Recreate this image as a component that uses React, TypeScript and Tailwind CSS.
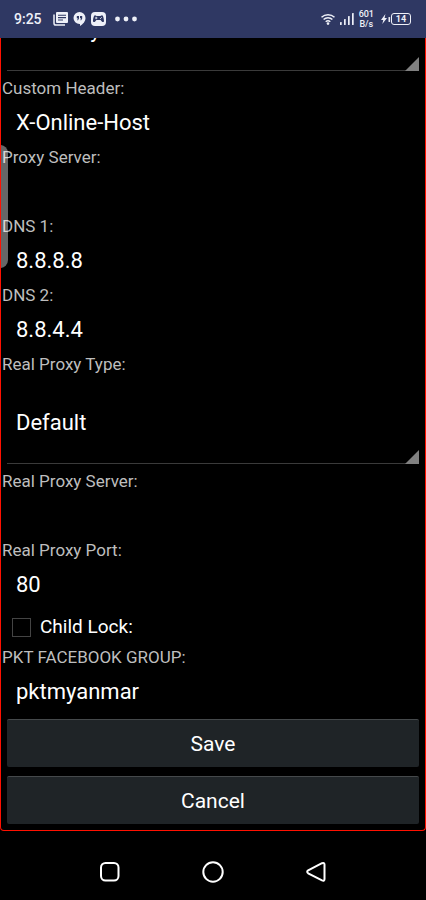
import { useState } from 'react';

interface TextFieldProps {
  id: string;
  label: string;
  initial?: string;
}

interface SelectBoxProps {
  id: string;
  options: string[];
  title?: string;
}

function FieldLabel({ id, label }: { id: string; label: string }) {
  return (
    <label htmlFor={id} className="block h-[21px] pl-px text-[17px] leading-[21px] text-[#bebebe]">
      {label}
    </label>
  );
}

function TextField({ id, label, initial = '' }: TextFieldProps) {
  const [value, setValue] = useState(initial);

  return (
    <div>
      <FieldLabel id={id} label={label} />
      <input
        id={id}
        type="text"
        value={value}
        onChange={(e) => setValue(e.target.value)}
        className="block h-12 w-full bg-transparent px-[15px] pb-0.5 text-[22px] text-white outline-none"
      />
    </div>
  );
}

function SelectBox({ id, options, title }: SelectBoxProps) {
  return (
    <div className="relative px-1.5 pb-[7px]">
      <select
        id={id}
        aria-label={title}
        className="block h-[89px] w-full appearance-none border-b border-[#3a3a3a] bg-black px-[9px] pt-1.5 text-[22px] text-white outline-none"
      >
        {options.map((option) => (
          <option key={option}>{option}</option>
        ))}
      </select>
      <svg
        className="pointer-events-none absolute right-1.5 bottom-[7px]"
        width="14"
        height="14"
        viewBox="0 0 14 14"
        fill="#808080"
      >
        <path d="M14 0v14H0z" />
      </svg>
    </div>
  );
}

function StatusBar() {
  return (
    <header className="relative z-10 flex h-[38px] items-center justify-between bg-[#2f3863] pr-[15px] pl-3.5 text-[#eef0f8]">
      <div className="flex items-center">
        <span className="text-sm font-medium">9:25</span>
        <svg className="ml-[11px]" width="15" height="14" viewBox="0 0 15 14" fill="none">
          <path d="M1 2.5v8.7c0 1 .8 1.8 1.8 1.8H12" stroke="currentColor" strokeWidth="1.5" />
          <rect x="3" width="12" height="11" rx="1" fill="currentColor" />
          <path d="M5 3.2h8M5 5.6h8M5 8h5" stroke="#2f3863" strokeWidth="1.1" />
        </svg>
        <svg className="ml-[5px]" width="13" height="14" viewBox="0 0 13 14">
          <path d="M6.5 0a6 6 0 0 1 6 6c0 3.4-2.6 6.3-5.5 8v-2h-.5a6 6 0 0 1 0-12z" fill="currentColor" />
          <path d="M3.8 4h2.2v2.6L5 8.2H4.2L4.8 6.3h-1zM7 4h2.2v2.6l-1 1.6h-.8L8 6.3H7z" fill="#2f3863" />
        </svg>
        <svg className="ml-[5px]" width="15" height="14" viewBox="0 0 15 14">
          <rect width="15" height="14" rx="4" fill="currentColor" />
          <path
            d="M4 3.3c1 0 1.4.8 2 .8h3c.6 0 1-.8 2-.8 1.2 0 2 3.8 2 5.7 0 1.3-1.4 1.4-2.2.4L9.6 8H5.4L4.2 9.4C3.4 10.4 2 10.3 2 9c0-1.900.8-5.700 2-5.700z"
            fill="#2f3863"
          />
          <path d="M4 6h2.4M5.2 4.800v2.400M9 7l1.800-1.800" stroke="#eef0f8" strokeWidth=".8" />
        </svg>
        <svg className="ml-[9px]" width="22" height="6" viewBox="0 0 22 6" fill="currentColor">
          <circle cx="2.5" cy="3" r="2.4" />
          <circle cx="11" cy="3" r="2.4" />
          <circle cx="19.5" cy="3" r="2.4" />
        </svg>
      </div>

      <div className="flex items-center">
        <svg width="14" height="12" viewBox="0 0 14 12" fill="none" stroke="currentColor" strokeWidth="1.5">
          <path d="M.5 4.2a9.5 9.5 0 0 1 13 0M2.6 6.5a6.5 6.5 0 0 1 8.8 0M4.7 8.8a3.5 3.5 0 0 1 4.6 0" />
          <circle cx="7" cy="10.6" r="1.3" fill="currentColor" stroke="none" />
        </svg>
        <svg className="ml-[5px]" width="14" height="12" viewBox="0 0 14 12" fill="currentColor">
          <rect y="9" width="1.7" height="3" rx=".6" />
          <rect x="4" y="6" width="1.7" height="6" rx=".6" />
          <rect x="8" y="3" width="1.7" height="9" rx=".6" />
          <rect x="12" width="1.7" height="12" rx=".6" />
        </svg>
        <div className="ml-[5px] flex flex-col items-center text-[9px] leading-[10px] font-medium">
          <span>601</span>
          <span>B/s</span>
        </div>
        <svg className="ml-[7px]" width="10" height="12" viewBox="0 0 10 12" fill="currentColor">
          <path d="M4.4 1 0 7h2.3L1.3 11 6 5H3.6z" />
          <rect x="7.5" y="4" width="1.6" height="5" rx=".6" />
        </svg>
        <span className="flex h-3 w-5 items-center justify-center rounded-[3px] border border-current text-[9px] leading-none font-bold">
          14
        </span>
      </div>
    </header>
  );
}

function ActionButton({ children }: { children: string }) {
  return (
    <button
      type="button"
      className="h-12 w-full rounded-[2px] border-t border-[#45494b] bg-[#1f2427] pt-[3px] text-[21px] text-white"
    >
      {children}
    </button>
  );
}

function NavBar() {
  return (
    <nav className="flex justify-center gap-[81px] pt-[30px] pb-4 text-white">
      <button type="button" aria-label="Recent apps">
        <svg width="22" height="22" viewBox="0 0 22 22" fill="none" stroke="currentColor" strokeWidth="2">
          <rect x="2" y="2" width="17.5" height="17.5" rx="4.5" />
        </svg>
      </button>
      <button type="button" aria-label="Home">
        <svg width="22" height="22" viewBox="0 0 22 22" fill="none" stroke="currentColor" strokeWidth="2">
          <circle cx="11" cy="11" r="9.7" />
        </svg>
      </button>
      <button type="button" aria-label="Back">
        <svg width="22" height="22" viewBox="0 0 22 22" fill="none" stroke="currentColor" strokeWidth="2">
          <path d="M17 2.2 3.2 9.3Q1.2 10.8 3.2 12.3L17 19.4Q19.5 20.4 19.5 18V3.6Q19.5 1.2 17 2.2z" />
        </svg>
      </button>
    </nav>
  );
}

export default function App() {
  const [childLock, setChildLock] = useState(false);

  return (
    <div className="flex min-h-screen flex-col bg-black font-[Roboto,sans-serif]">
      <StatusBar />
      <main className="relative overflow-hidden rounded-b-[4px] border-x border-b border-[#ff1000]">
        <form onSubmit={(e) => e.preventDefault()}>
          {/* scrolled partly under the status bar */}
          <div className="-mt-[56px]">
            <SelectBox id="route" title="Route" options={['Gateway']} />
          </div>
          <TextField id="header" label="Custom Header:" initial="X-Online-Host" />
          <TextField id="proxy" label="Proxy Server:" />
          <TextField id="dns1" label="DNS 1:" initial="8.8.8.8" />
          <TextField id="dns2" label="DNS 2:" initial="8.8.4.4" />
          <FieldLabel id="type" label="Real Proxy Type:" />
          <SelectBox id="type" options={['Default']} />
          <TextField id="real-server" label="Real Proxy Server:" />
          <TextField id="real-port" label="Real Proxy Port:" initial="80" />
          <label className="flex h-[38px] items-center gap-[9px] pb-0.5 pl-[11px] text-[19px] text-white">
            <input
              type="checkbox"
              checked={childLock}
              onChange={(e) => setChildLock(e.target.checked)}
              className="size-[19px] appearance-none border border-[#444] checked:bg-[#808080]"
            />
            Child Lock:
          </label>
          <TextField id="group" label="PKT FACEBOOK GROUP:" initial="pktmyanmar" />
          <div className="flex flex-col gap-[9px] px-1.5 pt-[3px] pb-1.5">
            <ActionButton>Save</ActionButton>
            <ActionButton>Cancel</ActionButton>
          </div>
        </form>
        <div className="absolute top-[107px] -left-px h-[123px] w-2 rounded-r-lg bg-white/40" />
      </main>
      <NavBar />
    </div>
  );
}
